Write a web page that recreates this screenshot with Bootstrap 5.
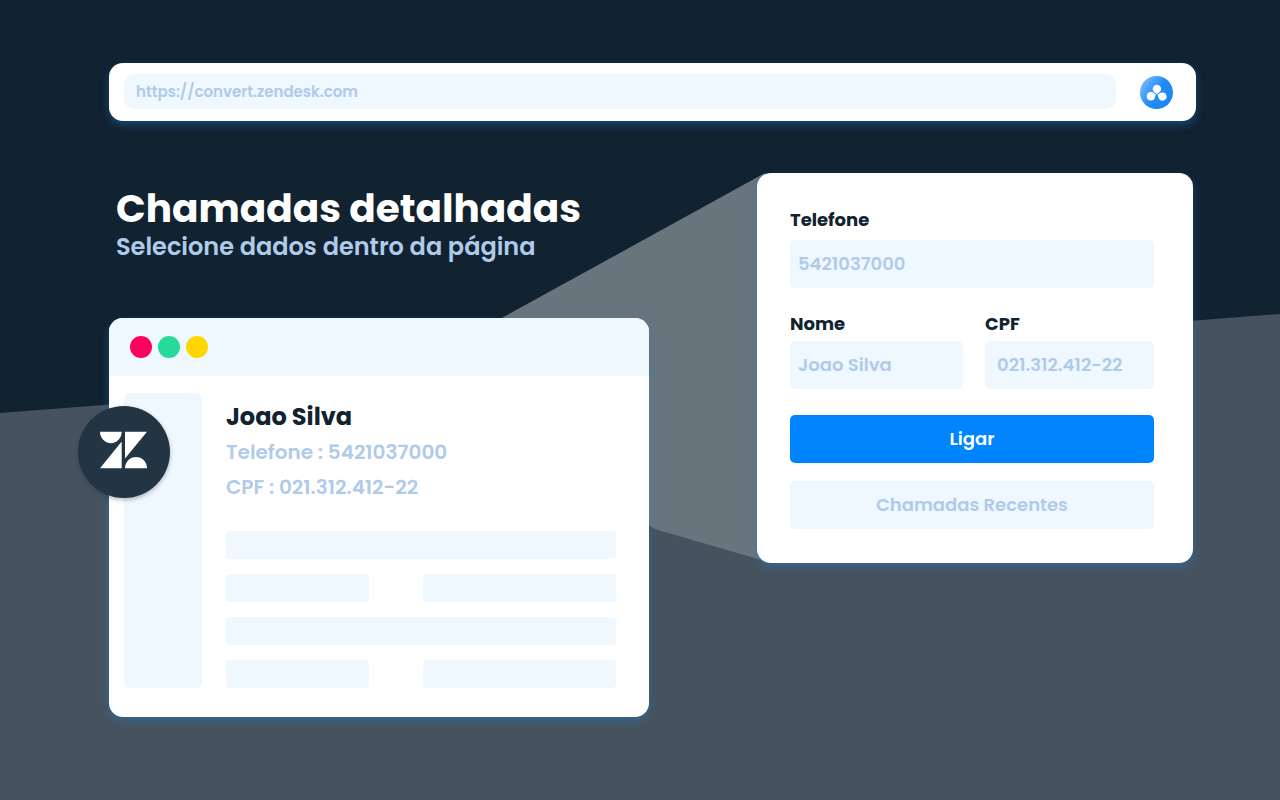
<!DOCTYPE html>
<html lang="pt-BR">
<head>
<meta charset="utf-8">
<meta name="viewport" content="width=device-width, initial-scale=1">
<title>Chamadas detalhadas</title>
<link href="https://cdn.jsdelivr.net/npm/bootstrap@5.3.0/dist/css/bootstrap.min.css" rel="stylesheet">
<style>
  :root { --ink: #112231; --pale: #eff7ff; --mist: #b0cbe9; --azure: #0085ff; }
  body { font-family: Poppins, Inter, sans-serif; font-weight: 600; background: var(--ink); color: var(--ink); }
  .page { padding: 63px 84px 83px 109px; }
  .backdrop { z-index: 0; }
  .panel { background: #fff; border-radius: 14px; box-shadow: 0 4px 8px rgba(32, 124, 204, .4); }
  .address-bar { padding: 11px 23px 12px 15px; gap: 24px; }
  .field { width: 100%; min-width: 0; border: 0; background: var(--pale); color: var(--mist); font-weight: 600; }
  .field:focus { outline: 2px solid var(--azure); }
  .url { height: 35px; border-radius: 10px; padding: 0 12px; font-size: 15px; }
  .app-btn { width: 33px; height: 33px; }
  .stage { display: grid; grid-template-columns: minmax(0, 540fr) minmax(0, 436fr); column-gap: 108px; margin-top: 52px; padding-right: 3px; align-items: start; }
  .intro { padding: 11px 7px 0; height: 145px; white-space: nowrap; }
  .intro h1 { font-size: 39px; line-height: 50px; font-weight: 700; color: #fff; }
  .intro p { font-size: 24px; line-height: 26px; color: var(--mist); }
  .titlebar { height: 58px; padding: 0 21px; gap: 6px; background: var(--pale); border-radius: 14px 14px 0 0; }
  .dot { width: 22px; height: 22px; }
  .window-body { padding: 17px 33px 29px 15px; gap: 24px; }
  .sidebar { width: 78px; background: var(--pale); border-radius: 6px; }
  .contact { padding-top: 6px; margin-bottom: 26px; white-space: nowrap; }
  .contact h2 { font-size: 24px; line-height: 36px; font-weight: 700; }
  .contact p { font-size: 20px; line-height: 35px; color: var(--mist); }
  .skeleton { display: grid; grid-template-columns: 143fr 193fr; gap: 15px 54px; }
  .skeleton span { height: 28px; background: var(--pale); border-radius: 4px; }
  .skeleton .wide { grid-column: span 2; }
  .brand-mark { left: -31px; top: 88px; width: 92px; height: 92px; filter: drop-shadow(0 2px 2px rgba(17, 34, 49, .3)); }
  .call-form { padding: 33px 39px 34px 33px; }
  .call-form label { display: block; font-size: 18px; line-height: 28px; font-weight: 700; margin-bottom: 6px; }
  .call-form .field { height: 48px; border-radius: 5px; padding: 0 8px 2px; font-size: 18px; }
  .call-form .field.roomy { padding: 0 12px 2px; }
  .pair { display: grid; grid-template-columns: minmax(0, 173fr) minmax(0, 169fr); column-gap: 22px; margin: 22px 0 26px; }
  .call-form .pair label { margin-bottom: 3px; }
  .action { --bs-btn-font-size: 18px; --bs-btn-font-weight: 600; --bs-btn-border-width: 0; --bs-btn-border-radius: 5px; height: 48px; padding: 0 12px 2px; }
  .action-call { --bs-btn-color: #fff; --bs-btn-bg: var(--azure); --bs-btn-hover-color: #fff; --bs-btn-hover-bg: #0074df; }
  .action-recent { --bs-btn-color: var(--mist); --bs-btn-bg: var(--pale); --bs-btn-hover-color: var(--mist); --bs-btn-hover-bg: #e0f0ff; margin-top: 18px; }
  @media (max-width: 991px) {
    .page { padding: 32px 24px 48px 40px; }
    .stage { grid-template-columns: minmax(0, 1fr); row-gap: 32px; }
    .intro { white-space: normal; height: auto; padding-bottom: 32px; }
  }
</style>
</head>
<body>
<div class="position-relative min-vh-100">
  <svg class="backdrop position-absolute top-0 start-0 w-100 h-100" viewBox="0 0 1280 800" preserveAspectRatio="none" aria-hidden="true">
    <path d="M0 413L1280 314V800H0Z" fill="#46535f"/>
    <path d="M480 330L765 173V561L658 530Q650 528 646 520Z" fill="#69757d"/>
  </svg>
  <div class="page position-relative">
    <header class="panel address-bar d-flex align-items-end">
      <input class="field url" type="text" value="https://convert.zendesk.com" aria-label="Endereço">
      <button class="app-btn btn p-0 border-0 rounded-circle d-flex flex-shrink-0" type="button" aria-label="Extensão">
        <svg width="33" height="33" viewBox="0 0 33 33" aria-hidden="true">
          <defs>
            <linearGradient id="sky" x1="0" y1="0.15" x2="1" y2="0.85">
              <stop offset="0" stop-color="#7dbcfb"/><stop offset=".5" stop-color="#1f8cfa"/><stop offset="1" stop-color="#1c86ee"/>
            </linearGradient>
          </defs>
          <circle cx="16.500" cy="16.500" r="16.500" fill="url(#sky)"/>
          <g fill="#fff">
            <path d="M16.800 18.400C16.200 17 12.700 16 12.700 12.900A4.200 4.200 0 0 1 21.100 12.900C21.100 16 17.600 17 16.800 18.400Z"/>
            <path d="M16 18.800C14.600 17.700 13.200 15.900 11 16A4.200 4.200 0 1 0 15.100 20.700C15.200 19.900 15.400 19.400 16 18.800Z"/>
            <path d="M17.300 18.700C18.900 18.500 19.900 16.500 22 16.500A4.100 4.100 0 1 1 18.600 21.900C18 21 18.300 19.900 17.300 18.700Z"/>
          </g>
        </svg>
      </button>
    </header>

    <main class="stage">
      <section>
        <div class="intro">
          <h1 class="m-0">Chamadas detalhadas</h1>
          <p class="m-0">Selecione dados dentro da página</p>
        </div>
        <div class="panel position-relative">
          <div class="titlebar d-flex align-items-center">
            <svg class="dot" viewBox="0 0 22 22" aria-hidden="true"><circle cx="11" cy="11" r="11" fill="#ff005c"/></svg>
            <svg class="dot" viewBox="0 0 22 22" aria-hidden="true"><circle cx="11" cy="11" r="11" fill="#26db99"/></svg>
            <svg class="dot" viewBox="0 0 22 22" aria-hidden="true"><circle cx="11" cy="11" r="11" fill="#ffd600"/></svg>
          </div>
          <div class="window-body d-flex">
            <div class="sidebar flex-shrink-0"></div>
            <div class="flex-grow-1">
              <div class="contact">
                <h2 class="m-0">Joao Silva</h2>
                <p class="m-0">Telefone : 5421037000</p>
                <p class="m-0">CPF : 021.312.412-22</p>
              </div>
              <div class="skeleton" aria-hidden="true">
                <span class="wide"></span>
                <span></span><span></span>
                <span class="wide"></span>
                <span></span><span></span>
              </div>
            </div>
          </div>
          <svg class="brand-mark position-absolute" viewBox="0 0 92 92" role="img" aria-label="Zendesk">
            <circle cx="46" cy="46" r="46" fill="#233443"/>
            <path fill="#fff" d="M22 25.700H43.700A10.850 11.500 0 0 1 22 25.700ZM47 25.700H69L47 52.500ZM43.700 35.500V62.300H22ZM47 62.300A11 11.300 0 0 1 69 62.300Z"/>
          </svg>
        </div>
      </section>

      <form class="panel call-form">
        <label for="phone">Telefone</label>
        <input class="field" id="phone" type="tel" value="5421037000">
        <div class="pair">
          <div>
            <label for="name">Nome</label>
            <input class="field" id="name" type="text" value="Joao Silva">
          </div>
          <div>
            <label for="cpf">CPF</label>
            <input class="field roomy" id="cpf" type="text" value="021.312.412-22">
          </div>
        </div>
        <button class="btn action action-call w-100" type="button">Ligar</button>
        <button class="btn action action-recent w-100" type="button">Chamadas Recentes</button>
      </form>
    </main>
  </div>
</div>
<script src="https://cdn.jsdelivr.net/npm/bootstrap@5.3.0/dist/js/bootstrap.bundle.min.js"></script>
</body>
</html>
